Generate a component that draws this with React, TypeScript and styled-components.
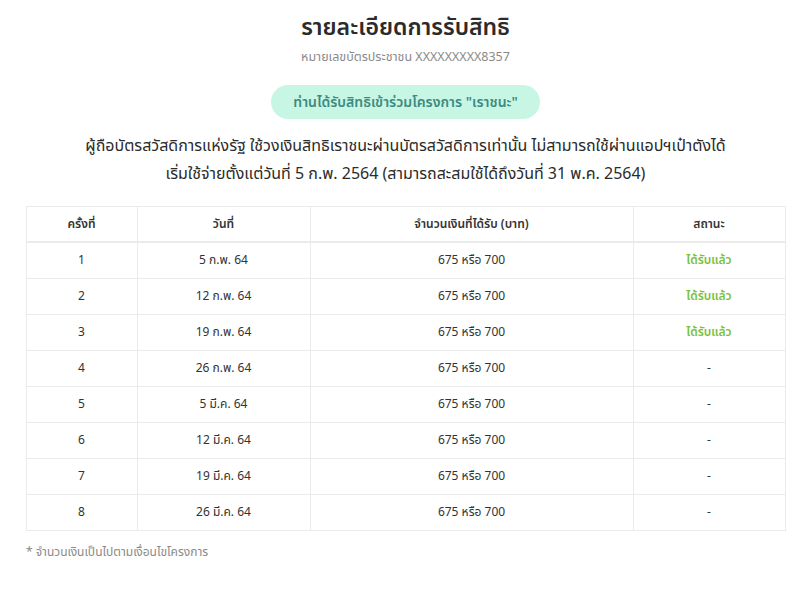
import React from "react";
import styled, { createGlobalStyle } from "styled-components";

const Global = createGlobalStyle`
  html, body { margin: 0; padding: 0; background: #ffffff; }
  body { font-family: "Noto Sans Thai", "Noto Sans", "Liberation Sans", sans-serif; color: #333333; }
`;

const Page = styled.div`
  padding: 10px 15px 0 26px;
  display: flex;
  flex-direction: column;
  align-items: center;
`;

const Title = styled.h1`
  margin: 0;
  font-size: 23px;
  font-weight: 600;
  line-height: 36px;
  color: #2b2b2b;
`;

const Sub = styled.div`
  margin-top: 3px;
  font-size: 12.5px;
  line-height: 18px;
  color: #8a8a8a;
`;

const Badge = styled.div`
  margin-top: 18px;
  height: 34px;
  padding: 0 22px;
  border-radius: 17px;
  background: #c7f6e4;
  color: #3d8b80;
  font-size: 14px;
  font-weight: 600;
  display: flex;
  align-items: center;
`;

const Lead = styled.p`
  margin: 13px 0 0;
  font-size: 16px;
  line-height: 28px;
  text-align: center;
  color: #2b2b2b;
`;

const Table = styled.table`
  margin-top: 18px;
  width: 759px;
  border-collapse: collapse;
  font-size: 12px;
  table-layout: fixed;
`;

const Th = styled.th<{ $w: number }>`
  box-sizing: border-box;
  width: ${(p) => p.$w}px;
  height: 35px;
  padding: 0;
  border: 1px solid #ebebeb;
  border-bottom-width: 2px;
  font-weight: 600;
  color: #333;
  text-align: center;
`;

const Td = styled.td<{ $ok?: boolean }>`
  height: 35px;
  padding: 0;
  border: 1px solid #ebebeb;
  text-align: center;
  color: ${(p) => (p.$ok ? "#78c23a" : "#333")};
  font-weight: ${(p) => (p.$ok ? 600 : 400)};
`;

const Note = styled.div`
  align-self: flex-start;
  margin-top: 12px;
  font-size: 12px;
  color: #8a8a8a;
`;

const rows = [
  ["1", "5 ก.พ. 64", true],
  ["2", "12 ก.พ. 64", true],
  ["3", "19 ก.พ. 64", true],
  ["4", "26 ก.พ. 64", false],
  ["5", "5 มี.ค. 64", false],
  ["6", "12 มี.ค. 64", false],
  ["7", "19 มี.ค. 64", false],
  ["8", "26 มี.ค. 64", false],
] as const;

export default function App() {
  return (
    <>
      <Global />
      <Page>
        <Title>รายละเอียดการรับสิทธิ</Title>
        <Sub>หมายเลขบัตรประชาชน XXXXXXXXX8357</Sub>
        <Badge>ท่านได้รับสิทธิเข้าร่วมโครงการ "เราชนะ"</Badge>
        <Lead>
          ผู้ถือบัตรสวัสดิการแห่งรัฐ ใช้วงเงินสิทธิเราชนะผ่านบัตรสวัสดิการเท่านั้น ไม่สามารถใช้ผ่านแอปฯเป๋าตังได้
          <br />
          เริ่มใช้จ่ายตั้งแต่วันที่ 5 ก.พ. 2564 (สามารถสะสมใช้ได้ถึงวันที่ 31 พ.ค. 2564)
        </Lead>
        <Table>
          <thead>
            <tr>
              <Th $w={111}>ครั้งที่</Th>
              <Th $w={173}>วันที่</Th>
              <Th $w={323}>จำนวนเงินที่ได้รับ (บาท)</Th>
              <Th $w={152}>สถานะ</Th>
            </tr>
          </thead>
          <tbody>
            {rows.map(([n, d, ok]) => (
              <tr key={n}>
                <Td>{n}</Td>
                <Td>{d}</Td>
                <Td>675 หรือ 700</Td>
                <Td $ok={ok}>{ok ? "ได้รับแล้ว" : "-"}</Td>
              </tr>
            ))}
          </tbody>
        </Table>
        <Note>* จำนวนเงินเป็นไปตามเงื่อนไขโครงการ</Note>
      </Page>
    </>
  );
}
